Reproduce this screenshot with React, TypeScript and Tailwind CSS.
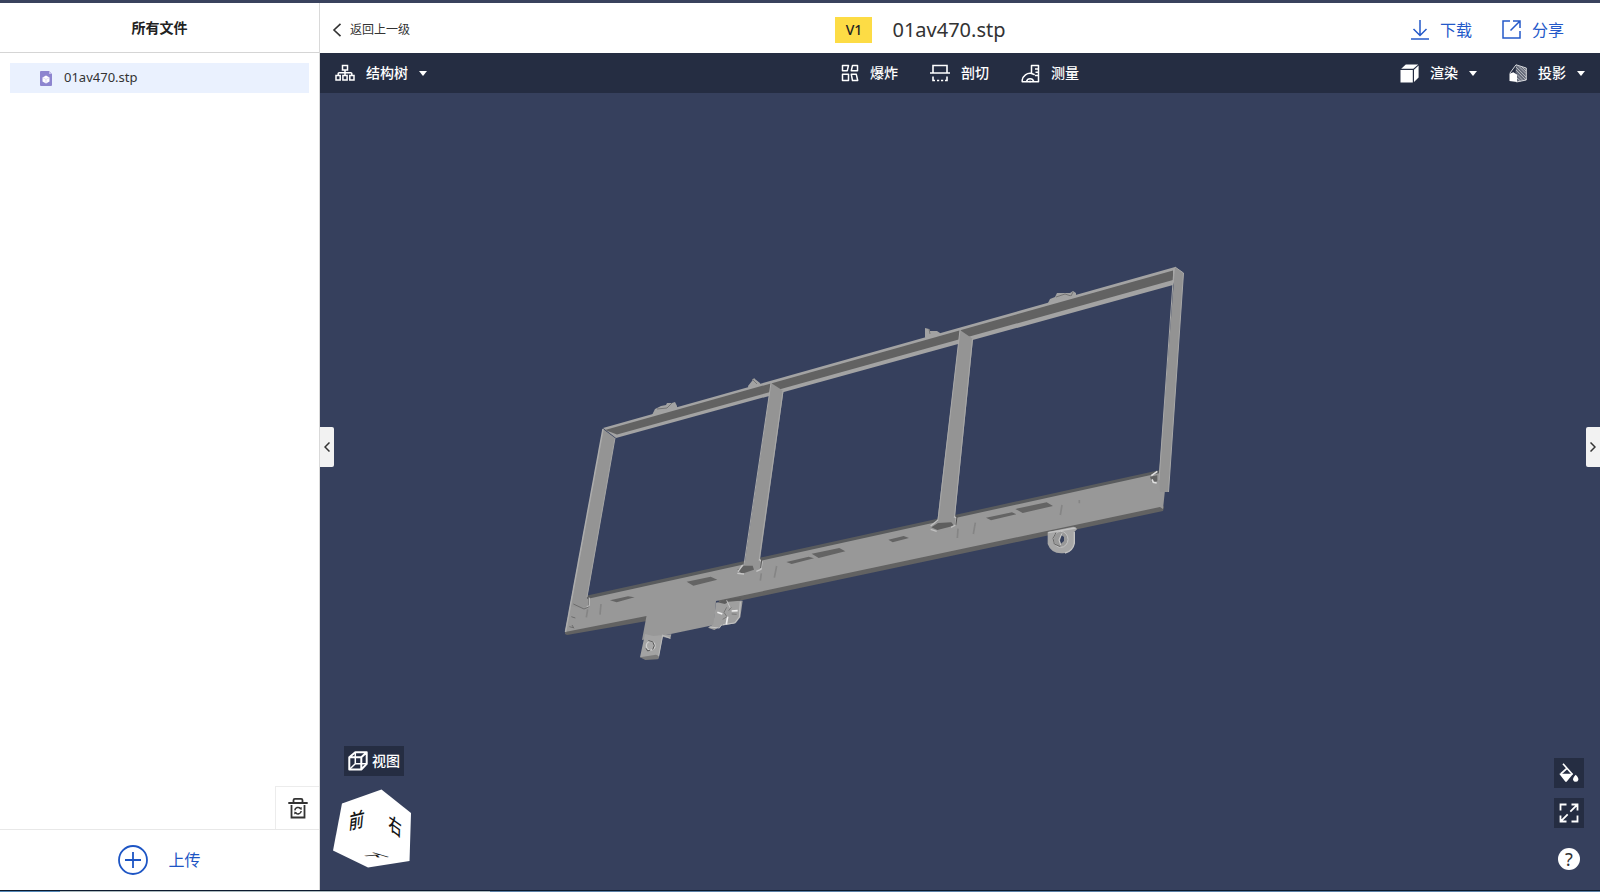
import type { ReactNode } from "react";

function TreeIcon() {
  return (
    <svg width="20" height="18" viewBox="0 0 20 18" fill="none" stroke="currentColor" strokeWidth="1.5">
      <rect x="7.5" y="1.5" width="5" height="4.5" />
      <path d="M10 6v5M3.2 11.5V9.6Q3.2 8.7 4.2 8.7h11.6q1 0 1 .9v1.9" />
      <rect x="1" y="11.5" width="4.2" height="4.5" />
      <rect x="7.9" y="11.5" width="4.2" height="4.5" />
      <rect x="14.8" y="11.5" width="4.2" height="4.5" />
    </svg>
  );
}

function ExplodeIcon() {
  return (
    <svg width="18" height="18" viewBox="0 0 18 18" fill="none" stroke="currentColor" strokeWidth="1.5" strokeLinejoin="round">
      <path d="M1.5 1.5h6L6.3 6.7H1.5zM11.5 1.5h5v5.2h-6.2zM1.5 10.3h6v6.2h-6zM10.3 10.3h5l1.4 6.2h-5.2z" />
    </svg>
  );
}

function SectionIcon() {
  return (
    <svg width="20" height="18" viewBox="0 0 20 18" fill="none" stroke="currentColor" strokeWidth="1.6">
      <path d="M3 9V1.5h14V9M0 9h20" />
      <path d="M3 12.5v4h2M7 16.5h2.2M11 16.5h2.2M15 16.5h2v-4" />
    </svg>
  );
}

function MeasureIcon() {
  return (
    <svg width="19" height="19" viewBox="0 0 19 19" fill="none" stroke="currentColor" strokeWidth="1.5" strokeLinejoin="round">
      <path d="M10.5 9.5v-8h7v16.3H1.2v-1.6a8 8 0 0 1 9.3-6.7l3.2 1.2" />
      <path d="M17 5h-3M17 8.3h-2.5M17 11.6h-3M5.5 17.5a3.7 3.7 0 0 1 7.2 0M8.2 17.5h1.8" />
    </svg>
  );
}

function RenderIcon() {
  return (
    <svg width="19" height="19" viewBox="0 0 19 19" fill="currentColor">
      <path d="M.5 6h12.3v12.5H.5zM1.2 4.8 5.8.5h12.4l-4.9 4.3zM14 5.7l4.6-4.3v12L14 18z" />
    </svg>
  );
}

function ProjectionIcon() {
  return (
    <svg width="18" height="19" viewBox="0 0 18 19" fill="none" stroke="currentColor">
      <path d="M7 .8 17.3 4v12L7.5 18M7 .8.8 9.3" strokeWidth="1" opacity=".8" />
      <path d="m7 1 10 3.2V16l-9 1.8V10L6.5 9z" fill="currentColor" opacity=".3" stroke="none" />
      <path d="m7 3 10 10M7 6l10 10M10 2.5l7 7M13 3l4 4M8 10.5l6 6M8 14l3.5 3" strokeWidth=".7" opacity=".7" />
      <path d="m.5 9.8 3.8-1.5L8 10.5V18l-7.5-1z" fill="currentColor" stroke="none" />
    </svg>
  );
}

function ViewIcon() {
  return (
    <svg width="20" height="20" viewBox="0 0 20 20" fill="none" stroke="currentColor" strokeLinejoin="round">
      <path d="M1.3 6.3h12v12.2h-12zM1.3 6.3l6-5h11.4v11.6l-5.4 5.6M13.3 6.3l5.4-5" strokeWidth="2" />
      <path d="M7.3 1.3v11.4h11.4M7.3 12.7l-6 5.8" strokeWidth="1.5" />
    </svg>
  );
}

function TrashIcon() {
  return (
    <svg width="20" height="22" viewBox="0 0 20 22" fill="none" stroke="currentColor" strokeWidth="1.8">
      <path d="M.3 6h19.4M5.5 5.5V3.2q0-1.4 1.4-1.4h6.2q1.4 0 1.4 1.4v2.3M3.5 8v12.5h13V8" />
      <path d="M6.800 13.400a3.300 3.300 0 0 1 5.800-1.800M13.200 14a3.300 3.300 0 0 1-5.800 1.800" strokeWidth="1.500" />
      <path d="m13.8 10-.2 3-2.600-1.200zM6.200 17.400l.2-3 2.600 1.200z" fill="currentColor" stroke="none" />
    </svg>
  );
}

function BucketIcon() {
  return (
    <svg width="20" height="20" viewBox="0 0 20 20" fill="none" stroke="currentColor" strokeWidth="1.7">
      <path d="M4 .8 13.500 11.500M8.200 5.200 1.7 11" />
      <path d="M.2 10.8h14L7.8 18.6q-.8.8-1.6 0zM16.7 11.8q3.3 3.4 2.6 5.1-.7 1.900-2.600 1.900t-2.600-1.900q-.600-1.700 2.600-5.100z" fill="currentColor" stroke="none" />
    </svg>
  );
}

function ExpandIcon() {
  return (
    <svg width="20" height="20" viewBox="0 0 20 20" fill="none" stroke="currentColor" strokeWidth="1.8">
      <path d="M1.5 7.5v-6h6M12.5 1.5h6v6M18.5 12.5v6h-6M7.5 18.5h-6v-6M18.3 1.7l-7 7M1.7 18.3l7-7" />
    </svg>
  );
}

function Caret() {
  return (
    <svg width="8" height="5" viewBox="0 0 8 5" fill="currentColor">
      <path d="M0 0h8L4 5z" />
    </svg>
  );
}

function ToolButton({ icon, label, caret }: { icon: ReactNode; label: string; caret?: boolean }) {
  return (
    <button type="button" className="flex items-center gap-[11px] text-sm font-medium text-white">
      {icon}
      <span>{label}</span>
      {caret && <Caret />}
    </button>
  );
}

function Model() {
  return (
    <svg className="absolute inset-0 h-full w-full" viewBox="320 93 1280 797" aria-hidden="true">
      {/* mounting clips behind the top rail */}
      <g fill="#a2a2a2">
        <path d="m652 415 3-6 6-3 5-1 1-2h5l3-1 2 4v5l-24 7z" />
        <path d="m748 386 4-5 2-3 1.5 1.5 4.5 3.5 1 4-12 4z" />
        <path d="m925 337v-9l4 1 1 2h7l3 2v4l-14 4z" />
        <path d="m1048 303 2-4 5-2 2-4h13l3-2 3 2v4l-26 8z" />
        <path d="m657 409 10-1 5-5M1056 297l9-3 6 2 2-4" fill="none" stroke="#747474" />
        <path d="m752 379 5 5M929 329l1 5" stroke="#777" />
      </g>

      {/* base plate */}
      <path d="M585 596 1160 470v6L585 603z" fill="#595b5d" />
      <path d="M565 630 647 615V621L567 635L565 634z" fill="#626262" />
      <path d="M717 598 1160 502 1164 507 1163 511 743 600 720 603z" fill="#626262" />
      <path d="M577 570 587 599 1160 473 1165 490 1163 509 1160 507 740 596 716 601 714 625 642 640 646.500 616 565 632z" fill="#989898" />

      {/* top rail */}
      <path d="M603 428 1175 267 1178 271 1173 285 616 438z" fill="#a3a3a3" />
      <path d="M605 430 1173 270.500V280L617 434.500z" fill="#626262" />

      {/* posts */}
      <path d="M603 429 615 438 587 598 589 606 580 608 570 606z" fill="#949494" />
      <path d="M603 429 565.500 632" stroke="#adadad" strokeWidth="1.500" />
      <path d="M615 438 587 597" stroke="#a5a5a5" />
      <path d="M771 383 783.500 391 760 560V569L744 568z" fill="#949494" />
      <path d="M771 383 744 565M783 391 759 561" stroke="#a9a9a9" />
      <path d="M960 330 973 339 955 516V524H937z" fill="#949494" />
      <path d="M960 330 938 520M972.500 339 954.500 517" stroke="#a9a9a9" />
      <path d="M1175 267 1183.500 273 1168.500 492H1160L1159 475z" fill="#939393" />
      <path d="M1175 267 1183.500 273 1168.500 492M1174 268 1159 480" fill="none" stroke="#a8a8a8" />

      <g transform="translate(550 360) scale(.33333)">
        {/* left half of the plate */}
        <path d="M180 721 234 709 254 712 200 727zM410 665 482 650 502 659 430 677zM709 606 776 590 792 595 725 612zM785 581 868 564 886 574 806 594z" fill="#646464" />
        <path d="M562 629 582 617H608L612 629 576 641z" fill="#626262" />
        <path d="m564 635 14-20M562 640l20 2M628 598l8 8-3 22-14 6" fill="none" stroke="#c6c6c6" strokeWidth="4" />
        <path d="m635 600-3 24" stroke="#535353" strokeWidth="3" />
        <path d="m70 732 32 15 14-6v-30M64 770l12 4M58 800l12 3M66 795l6 10" fill="none" stroke="#6c6c6c" strokeWidth="3" />
        <path d="m110 740 8-3v-24" fill="none" stroke="#c2c2c2" strokeWidth="3" />
        <path d="m113 748-4 24M153 732l-3 32M634 640l-3 22M680 618l-7 35" stroke="#858585" strokeWidth="5" />
        {/* lower clevis */}
        <path d="M285 822 270 892 325 896 338 830 361 836 364 823 310 828z" fill="#a3a3a3" />
        <path d="m270 892 48-8 10 5-5 9-37 2z" fill="#7b7b7b" />
        <path d="m338 826-12 63M336 825l25 10" stroke="#bcbcbc" strokeWidth="3" />
        <circle cx="302" cy="857" r="13" fill="#a9a9a9" stroke="#cfcfcf" strokeWidth="4" />
        <path d="m295 842 13 3 5 12-5 12M288 865l5 8 8-3" fill="none" stroke="#555" strokeWidth="3" />
        {/* pin bracket */}
        <path d="M498 728 530 720 578 722 571 772 557 790 515 797 493 810 474 803 490 793z" fill="#9f9f9f" />
        <path d="M502 727 530 718 575 713 570 722 535 725 525 732z" fill="#5d5d5d" />
        <path d="m571 725-3 46-14 18-35 5M530 721l12 26M478 801l30 3 7-10" fill="none" stroke="#c4c4c4" strokeWidth="3" />
        <path d="m502 757 15 5M545 753l18-1M533 770l-4 23" stroke="#eee" strokeWidth="5" />
        <path d="m530 742-8 15 8 12M544 742l-8 10M518 778l13-8M545 762l15 1" fill="none" stroke="#777" strokeWidth="3" />
      </g>

      <g transform="translate(860 250) scale(.33333)">
        {/* right half of the plate */}
        <path d="M85 869 131 858 147 864 98 877zM378 803 456 787 469 793 393 811zM466 777 560 757 579 768 488 789z" fill="#646464" />
        <path d="M214 832 234 819 274 817 282 827 232 840z" fill="#5e5e5e" />
        <path d="m212 828 22-18M212 838l18 6M282 800l7 4v20l-16 8" fill="none" stroke="#c0c0c0" strokeWidth="4" />
        <path d="m291 798-3 28" stroke="#4f4f4f" strokeWidth="3" />
        <path d="m294 836-2 28M346 818l-6 34M606 765l-5 30M658 750v10" stroke="#858585" strokeWidth="5" />
        <path d="M870 680 892 676V694L876 697z" fill="#626262" />
        <path d="m874 677 18-13M876 688l4 9 10 2" fill="none" stroke="#e0e0e0" strokeWidth="5" />
        {/* hanging eye */}
        <path d="M563 846 640 830 652 836 643 846V880Q638 904 615 909 575 915 563 882z" fill="#a7a7a7" />
        <path d="m565 848 82-14M643 846v34q-5 24-28 29" fill="none" stroke="#c4c4c4" strokeWidth="4" />
        <ellipse cx="602" cy="868" rx="22" ry="24" fill="#999" stroke="#c4c4c4" strokeWidth="3" />
        <path d="m605 856 7 5v12l-9 8-3-10z" fill="#36405d" />
        <path d="m588 848-9 17 4 17 18 8" fill="none" stroke="#686868" strokeWidth="3" />
        <path d="m606 850-9 20 5 15" fill="none" stroke="#ccc" strokeWidth="3" />
      </g>
    </svg>
  );
}

function ViewCube() {
  return (
    <svg width="80" height="80" viewBox="0 0 80 80" className="absolute bottom-[21px] left-3" role="img" aria-label="前 右 下">
      <path d="M49.500.500 79 24l-1.500 48L36 78.500 1 61.500l9-47z" fill="#fff" />
      <g fill="#151515" fontSize="17" fontWeight="500" textAnchor="middle">
        <text transform="matrix(.9 -.22 -.12 1.2 24 39)">前</text>
        <text transform="matrix(.78 .56 -.03 1.1 63 44)">右</text>
        <text transform="matrix(1 .3 -1.1 .1 35 67)">下</text>
      </g>
    </svg>
  );
}

export default function App() {
  return (
    <div className="flex h-screen flex-col bg-white font-['Noto_Sans','Noto_Sans_CJK_SC',sans-serif] text-[#222]">
      <div className="h-[3px] shrink-0 bg-[#39425d]" />
      <div className="flex min-h-0 flex-1">
        <aside className="flex w-80 shrink-0 flex-col border-r border-[#d9d9d9]">
          <h2 className="flex h-[50px] items-center justify-center border-b border-[#d5d5d5] text-sm font-bold">所有文件</h2>
          <div className="flex-1 p-[10px]">
            <a href="#file" className="flex h-[30px] items-center gap-3 bg-[#eaf1fe] pl-[30px] text-[13px] text-[#333]">
              <svg width="12" height="15" viewBox="0 0 12 15">
                <path d="M1 0h8l3 3v11q0 1-1 1H1q-1 0-1-1V1q0-1 1-1z" fill="#8d85cf" />
                <path d="M9 0v3h3z" fill="#c5c0ec" />
                <path d="m6 4.500 3.500 2v4L6 12.500l-3.500-2v-4z" fill="#fff" />
                <path d="m2.800 6.700 3.200 1.700 3.200-1.700M6 8.400v3.800" fill="none" stroke="#c9c5ec" strokeWidth=".6" />
              </svg>
              <span>01av470.stp</span>
            </a>
          </div>
          <div className="flex justify-end">
            <button type="button" aria-label="回收站" className="flex h-[43px] w-11 items-center justify-center border-t border-l border-[#ececec] text-[#333]">
              <TrashIcon />
            </button>
          </div>
          <button type="button" className="flex h-[61px] items-center justify-center gap-5 border-t border-[#e8e8e8] text-base text-[#1d55c4]">
            <svg width="30" height="30" viewBox="0 0 30 30" fill="none" stroke="currentColor" strokeWidth="1.800">
              <circle cx="15" cy="15" r="14" />
              <path d="M15 7v16M7 15h16" />
            </svg>
            <span>上传</span>
          </button>
        </aside>

        <main className="flex min-w-0 flex-1 flex-col">
          <header className="flex h-[50px] shrink-0 items-center justify-between pt-[3px] pr-9 pl-3">
            <button type="button" className="flex items-center gap-2 pr-5 text-xs text-[#333]">
              <svg width="10" height="14" viewBox="0 0 10 14" fill="none" stroke="currentColor" strokeWidth="1.600">
                <path d="M8.500.800 2 7l6.500 6.200" />
              </svg>
              <span>返回上一级</span>
            </button>
            <div className="flex items-center gap-5">
              <span className="flex h-[26px] w-[37px] items-center justify-center bg-[#fddc45] text-sm font-medium">V1</span>
              <h1 className="text-xl text-[#333]">01av470.stp</h1>
            </div>
            <div className="flex items-center gap-[30px] text-base text-[#2459c9]">
              <button type="button" className="flex items-center gap-[11px]">
                <svg width="18" height="20" viewBox="0 0 18 20" fill="none" stroke="currentColor" strokeWidth="1.500">
                  <path d="M9 0v15M2.500 9 9 15.500 15.500 9M0 19h18" />
                </svg>
                <span>下载</span>
              </button>
              <button type="button" className="flex items-center gap-[11px]">
                <svg width="19" height="19" viewBox="0 0 19 19" fill="none" stroke="currentColor" strokeWidth="1.500">
                  <path d="M8 1H1v17h17v-7M11 1h7v7M18 1l-9.500 9.500" />
                </svg>
                <span>分享</span>
              </button>
            </div>
          </header>

          <nav className="grid h-10 shrink-0 grid-cols-[1fr_auto_1fr] items-center bg-[#252d42] px-[15px]">
            <div className="flex">
              <ToolButton icon={<TreeIcon />} label="结构树" caret />
            </div>
            <div className="flex gap-8">
              <ToolButton icon={<ExplodeIcon />} label="爆炸" />
              <ToolButton icon={<SectionIcon />} label="剖切" />
              <ToolButton icon={<MeasureIcon />} label="测量" />
            </div>
            <div className="flex justify-end gap-8">
              <ToolButton icon={<RenderIcon />} label="渲染" caret />
              <ToolButton icon={<ProjectionIcon />} label="投影" caret />
            </div>
          </nav>

          <section className="relative min-h-0 flex-1 overflow-hidden bg-[#36405d]">
            <Model />
            <button type="button" aria-label="收起文件列表" className="absolute top-[334px] left-0 flex h-10 w-[14px] items-center justify-center rounded-r-xs bg-[#f2f2f2] text-[#333]">
              <svg width="6" height="10" viewBox="0 0 6 10" fill="none" stroke="currentColor" strokeWidth="1.500">
                <path d="M5.500.500 1 5l4.500 4.500" />
              </svg>
            </button>
            <button type="button" aria-label="展开属性面板" className="absolute top-[334px] right-0 flex h-10 w-[14px] items-center justify-center rounded-l-xs bg-[#f2f2f2] text-[#333]">
              <svg width="6" height="10" viewBox="0 0 6 10" fill="none" stroke="currentColor" strokeWidth="1.500">
                <path d="M.500.500 5 5 .500 9.500" />
              </svg>
            </button>

            <button type="button" className="absolute bottom-[114px] left-6 flex h-[30px] w-[60px] items-center justify-center gap-1 bg-[#252d42] text-sm font-medium text-white">
              <ViewIcon />
              <span>视图</span>
            </button>
            <ViewCube />

            <div className="absolute right-4 bottom-5 flex flex-col items-center gap-[10px] text-white">
              <button type="button" aria-label="背景" className="flex size-[30px] items-center justify-center bg-[#252d42]">
                <BucketIcon />
              </button>
              <button type="button" aria-label="全屏" className="flex size-[30px] items-center justify-center bg-[#252d42]">
                <ExpandIcon />
              </button>
              <button type="button" className="mt-[10px] flex size-[22px] items-center justify-center rounded-full bg-white text-lg leading-none text-[#333]">
                ?
              </button>
            </div>
          </section>
        </main>
      </div>
      <div className="flex h-[2px] shrink-0 border-t border-[#0c1a2e]">
        <div className="w-[60px] bg-[#5488b8]" />
        <div className="w-[430px] bg-[#a9b8bd]" />
        <div className="flex-1 bg-[#5a7fa6]" />
      </div>
    </div>
  );
}
